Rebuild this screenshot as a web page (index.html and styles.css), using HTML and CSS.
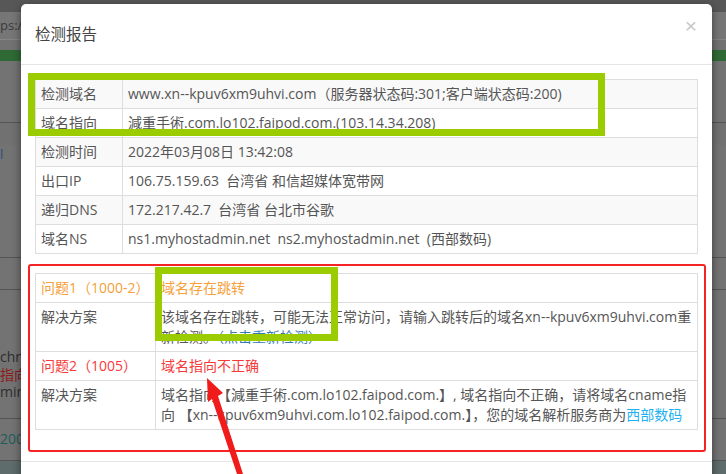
FILE: index.html
```html
<!DOCTYPE html>
<html lang="zh-CN">
<head>
<meta charset="utf-8">
<title>检测报告</title>
<link rel="stylesheet" href="styles.css">
</head>
<body>
<div class="page">
  <div class="pg-top"></div>
  <div class="pg-url">ps:/</div>
  <div class="pg-gap"></div>
  <div class="pg-green"></div>
  <div class="pg-sec s1"></div>
  <div class="pg-sec s2"><span class="pg-blue">l</span></div>
  <div class="pg-sec s3"></div>
  <div class="pg-sec s4"><div>chne</div><div class="pg-red">指向</div><div>min.r</div></div>
  <div class="pg-sec s5"><span class="pg-teal">200;</span></div>
  <div class="pg-block"><span class="pg-tag">n</span><span class="pg-tag">西部</span></div>
</div>

<div class="modal">
  <div class="modal-header">
    <h4 class="modal-title">检测报告</h4>
    <span class="close">×</span>
  </div>
  <div class="modal-body">
    <table class="tbl tbl-info">
      <tr><td class="lbl">检测域名</td><td>www.xn--kpuv6xm9uhvi.com（服务器状态码:301;客户端状态码:200)</td></tr>
      <tr><td class="lbl">域名指向</td><td>減重手術.com.lo102.faipod.com.(103.14.34.208)</td></tr>
      <tr><td class="lbl">检测时间</td><td>2022年03月08日 13:42:08</td></tr>
      <tr><td class="lbl">出口IP</td><td>106.75.159.63&nbsp; 台湾省 和信超媒体宽带网</td></tr>
      <tr><td class="lbl">递归DNS</td><td>172.217.42.7&nbsp; 台湾省 台北市谷歌</td></tr>
      <tr><td class="lbl">域名NS</td><td>ns1.myhostadmin.net&nbsp; ns2.myhostadmin.net&nbsp; (西部数码)</td></tr>
    </table>
    <div class="issues">
      <table class="tbl tbl-issue">
        <tr><td class="lbl warn">问题1（1000-2）</td><td class="warn">域名存在跳转</td></tr>
        <tr><td class="lbl">解决方案</td><td>该域名存在跳转，可能无法正常访问，请输入跳转后的域名xn--kpuv6xm9uhvi.com重新检测。<a class="link">（点击重新检测）</a></td></tr>
        <tr><td class="lbl err">问题2（1005）</td><td class="err">域名指向不正确</td></tr>
        <tr><td class="lbl">解决方案</td><td>域名指向【減重手術.com.lo102.faipod.com.】, 域名指向不正确，请将域名cname指向 【xn--kpuv6xm9uhvi.com.lo102.faipod.com.】，您的域名解析服务商为<a class="link-cyan">西部数码</a></td></tr>
      </table>
    </div>
  </div>
  <div class="modal-footer"></div>
  <div class="mark mark1"></div>
  <div class="mark mark2"></div>
</div>

<svg class="arrow" width="726" height="474" viewBox="0 0 726 474">
  <polygon points="207,378 223,393 218,396 243,474 237,474 212,399 208,402" fill="#f01c1c"/>
</svg>
</body>
</html>
```

FILE: styles.css
```css
html, body {
  margin: 0;
  padding: 0;
}
body {
  width: 726px;
  height: 474px;
  overflow: hidden;
  position: relative;
  font-family: "Open Sans", "Noto Sans CJK SC", sans-serif;
  font-size: 14px;
  color: #555;
  background: #6f6f6f;
}

/* dimmed page behind the dialog */
.page {
  width: 726px;
  height: 474px;
  background: #717171;
  font-size: 14px;
  color: #2e2e2e;
}
.pg-top { height: 12px; background: #575757; }
.pg-url {
  height: 27px;
  line-height: 27px;
  border-bottom: 1px solid #858585;
  background: #767676;
  color: #3a3a3a;
  font-size: 13px;
}
.pg-gap { height: 10px; background: #727272; }
.pg-green { height: 11px; background: #2f6a35; }
.pg-sec { border-bottom: 1px solid #545454; background: #737373; }
.s1 { height: 61px; }
.s2 { height: 112px; }
.s2 .pg-blue { display: block; margin-top: 22px; color: #2a4f7a; font-size: 13px; }
.s3 { height: 31px; }
.s4 { height: 129px; box-sizing: border-box; padding-top: 58px; line-height: 17.5px; font-size: 14px; }
.s4 .pg-red { color: #8e1a1a; }
.s5 { height: 42px; box-sizing: border-box; padding-top: 10px; }
.pg-teal { color: #1f5c5c; font-size: 14px; }
.pg-block {
  height: 34px;
  background: #5f6c6c;
  display: flex;
  align-items: flex-end;
  gap: 1px;
}
.pg-tag {
  font-size: 9px;
  line-height: 9px;
  background: #2f6a35;
  color: #9fd09f;
  padding: 0 1px;
}

/* dialog */
.modal {
  position: absolute;
  left: 21px;
  top: 4px;
  width: 691px;
  height: 500px;
  background: #fff;
  border-radius: 5px;
  box-shadow: 0 3px 9px rgba(0, 0, 0, 0.5);
}
.modal-header {
  height: 60px;
  border-bottom: 1px solid #e5e5e5;
  padding: 0 14px;
  display: flex;
  align-items: center;
  justify-content: space-between;
}
.modal-title {
  margin: 0;
  font-size: 15.5px;
  font-weight: normal;
  color: #444;
  line-height: 20px;
}
.close {
  font-size: 21px;
  line-height: 21px;
  color: #c8c8c8;
  font-family: "Liberation Sans", sans-serif;
  margin-top: -18px;
  margin-right: 1px;
}
.modal-body {
  padding: 14px 14px 9px 14px;
}
.modal-footer {
  border-top: 1px solid #e5e5e5;
}

.tbl {
  width: 100%;
  border-collapse: collapse;
  border: 1px solid #ddd;
}
.tbl td {
  border: 1px solid #ddd;
  padding: 4px 5px;
  line-height: 20px;
  vertical-align: top;
  color: #555;
}
.tbl-info .lbl { width: 76px; }
.tbl-info tr:nth-child(odd) td { background: #f9f9f9; }
.tbl-issue .lbl { width: 109px; }

.issues {
  margin: 10px -8px 0 -7px;
  border: 2px solid #f52424;
  border-radius: 3px;
  padding: 7px 6px 20px 5px;
}
.tbl td.warn { color: #f5a03a; }
.tbl td.err { color: #f53a3a; }
.link { color: #337ab7; }
.link-cyan { color: #1fb2f0; }

/* annotation boxes */
.mark {
  position: absolute;
  box-sizing: border-box;
  border: 7px solid #9bcc00;
}
.mark1 { left: 7px; top: 69px; width: 577px; height: 63px; }
.mark2 { left: 134px; top: 263px; width: 183px; height: 74px; }

.arrow {
  position: absolute;
  left: 0;
  top: 0;
}
```
